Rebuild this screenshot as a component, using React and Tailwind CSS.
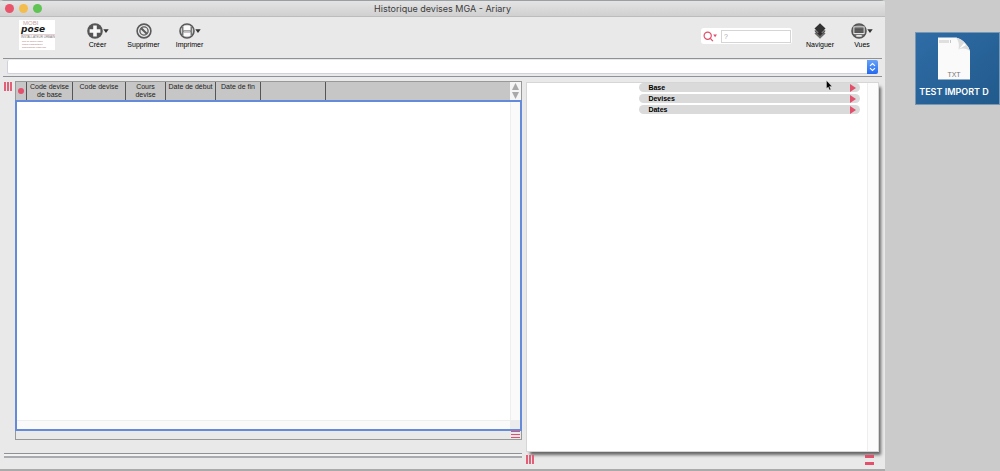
import React from "react";

const columns = [
  { label: "Code devise de base", width: "w-[46px]" },
  { label: "Code devise", width: "w-[53px]" },
  { label: "Cours devise", width: "w-[40px]" },
  { label: "Date de début", width: "w-[50px]" },
  { label: "Date de fin", width: "w-[45px]" },
  { label: "", width: "w-[65px]" },
];

const sections = ["Base", "Devises", "Dates"];

function Caret() {
  return (
    <svg width="6" height="4" viewBox="0 0 6 4" className="shrink-0" aria-hidden="true">
      <path d="M0.3 0.3h5.4L3 3.9z" fill="#333" />
    </svg>
  );
}

function CreateIcon() {
  return (
    <svg width="16" height="16" viewBox="0 0 16 16" aria-hidden="true">
      <circle cx="8" cy="8" r="7.8" fill="#555" />
      <path d="M6.2 2.6h3.6v3.6h3.6v3.6H9.8v3.6H6.2V9.8H2.6V6.2h3.6z" fill="#f7f7f7" />
    </svg>
  );
}

function DeleteIcon() {
  return (
    <svg width="16" height="16" viewBox="0 0 16 16" fill="none" aria-hidden="true">
      <circle cx="8" cy="8" r="6.9" stroke="#5a5a5a" strokeWidth="1.6" />
      <circle cx="8" cy="8" r="4.1" stroke="#5a5a5a" strokeWidth="1.3" />
      <path d="M5.2 5.2l5.6 5.6" stroke="#5a5a5a" strokeWidth="2" />
    </svg>
  );
}

function PrintIcon() {
  return (
    <svg width="16" height="16" viewBox="0 0 16 16" fill="none" aria-hidden="true">
      <circle cx="8" cy="8" r="7" fill="#d0d0d0" stroke="#5a5a5a" strokeWidth="1.6" />
      <path d="M3.600 4v8.500M12.400 4v8.500" stroke="#777" strokeWidth="1.200" />
      <path d="M5 2.800h6v4.200H5zM5 9.800h6v3.200H5z" fill="#fafafa" />
      <path d="M3.500 8.300h9" stroke="#888" strokeWidth="2" />
      <path d="M5 8.300h6" stroke="#ccc" strokeWidth="1" />
    </svg>
  );
}

function NavigateIcon() {
  return (
    <svg width="12" height="16" viewBox="0 0 12 16" aria-hidden="true">
      <path d="M6 5.600l5.500 5L6 15.800l-5.500-5.200z" fill="#6a6a6a" />
      <path d="M6 3l5.500 5L6 13.200.5 8z" fill="#777" />
      <path d="M6 .3l5.500 5.200L6 10.700.5 5.500z" fill="#333" />
      <path d="M6 8.300l2.500 2.300L6 12.900l-2.500-2.300z" fill="#2c2c2c" />
      <path d="M.8 8l5.200 4.800L11.200 8" stroke="#444" strokeWidth=".8" fill="none" />
    </svg>
  );
}

function ViewsIcon() {
  return (
    <svg width="16" height="16" viewBox="0 0 16 16" fill="none" aria-hidden="true">
      <circle cx="8" cy="8" r="7" fill="#777" stroke="#555" strokeWidth="1.6" />
      <rect x="2.9" y="3.9" width="10.2" height="6.6" fill="#505050" stroke="#e4e4e4" strokeWidth="1" />
      <path d="M4 5.5h8M4 7.2h8M4 8.900h8" stroke="#777" strokeWidth=".5" />
      <path d="M5.300 12h5.400v1.800H5.300z" fill="#e8e8e8" />
    </svg>
  );
}

function ToolButton({ label, icon, menu, width }) {
  return (
    <button type="button" className={`flex flex-col items-center gap-0.5 ${width}`}>
      <span className="flex items-center">
        {icon}
        {menu && <Caret />}
      </span>
      <span className="text-[7px] leading-[8px] text-black">{label}</span>
    </button>
  );
}

function Grip() {
  return (
    <span className="flex h-[9px] w-2 shrink-0 justify-between" aria-hidden="true">
      <i className="w-[2px] bg-[#e25f78]" />
      <i className="w-[2px] bg-[#e25f78]" />
      <i className="w-[2px] bg-[#e25f78]" />
    </span>
  );
}

function Logo() {
  return (
    <div className="h-[30px] w-9 shrink-0 overflow-hidden bg-white pl-0.5">
      <p className="pl-0.5 text-[6px] leading-[6px] text-[#c9a3a3]">MOBI</p>
      <p className="font-['DejaVu_Sans',sans-serif] text-[9px] font-bold italic leading-[7px] text-[#1b1b1b]">pose</p>
      <div className="mt-px h-px bg-[#e6cccc]" />
      <p className="whitespace-nowrap text-[3px] leading-[4px] text-[#777]">INSTALLATEUR URBAIN</p>
      <div className="flex flex-col items-start pl-px pt-px text-[2px] leading-[3px] text-[#a06a6a]">
        <p>pose de mobilier urbain</p>
        <p>études et signalétiques</p>
        <p>www.mobipose-urbain.com</p>
      </div>
    </div>
  );
}

function TitleBar() {
  return (
    <header className="grid h-[17px] grid-cols-[1fr_auto_1fr] items-center border-b border-t border-b-[#bcbcbc] border-t-[#9a9fa3] bg-linear-to-b from-[#e4e4e4] to-[#d0d0d0] px-[5px]">
      <div className="flex gap-[5px]">
        <button type="button" aria-label="Fermer" className="size-[9px] rounded-full bg-[#e9546b]" />
        <button type="button" aria-label="Réduire" className="size-[9px] rounded-full bg-[#f3bd4e]" />
        <button type="button" aria-label="Agrandir" className="size-[9px] rounded-full bg-[#5fc454]" />
      </div>
      <h1 className="pt-px font-[Inter,sans-serif] text-[9px] leading-[14px] text-[#3c3c3c]">
        Historique devises MGA - Ariary
      </h1>
    </header>
  );
}

function Toolbar() {
  return (
    <div className="mx-[3px] flex h-[42px] items-start border-b border-[#8f9294] pl-4 pt-[3px]">
      <Logo />
      <div className="flex pl-6 pt-[3px]">
        <ToolButton label="Créer" icon={<CreateIcon />} menu width="w-[37px]" />
        <ToolButton label="Supprimer" icon={<DeleteIcon />} width="w-[55px]" />
        <ToolButton label="Imprimer" icon={<PrintIcon />} menu width="w-[37px]" />
      </div>
      <div className="ml-auto flex items-start pr-0.5 pt-[3px]">
        <div className="mr-3 mt-[5px] flex h-4 w-[91px] items-center gap-1 rounded-[3px] bg-white p-px pl-0.5">
          <button type="button" aria-label="Options de recherche" className="flex">
            <svg width="14" height="11" viewBox="0 0 14 11" fill="none" aria-hidden="true">
              <circle cx="4.7" cy="4.7" r="3.6" stroke="#e0506c" strokeWidth="1.2" />
              <path d="M7.3 7.4l2.6 2.7" stroke="#e0506c" strokeWidth="1.3" />
              <path d="M10.2 3.400h3.800l-1.900 2.800z" fill="#e0506c" />
            </svg>
          </button>
          <input
            type="text"
            aria-label="Rechercher"
            placeholder="?"
            className="h-[13px] w-0 flex-1 border border-[#d5d5d5] bg-white px-0.5 text-[7px] placeholder:text-[#aaa]"
          />
        </div>
        <ToolButton label="Naviguer" icon={<NavigateIcon />} width="w-[32px]" />
        <ToolButton label="Vues" icon={<ViewsIcon />} menu width="ml-2 w-[36px]" />
      </div>
    </div>
  );
}

function Combo() {
  return (
    <div className="mx-[3px] border-b border-[#8f9294] pb-0.5 pl-1 pr-1 pt-px">
      <div className="flex h-[14px] items-stretch">
        <select
          aria-label="Filtre"
          className="min-w-0 flex-1 appearance-none rounded-l-[2px] border-b border-l border-[#cfd2da] bg-white"
        >
          <option value="" />
        </select>
        <span className="flex w-[11px] items-center justify-center rounded-r-[2px] bg-linear-to-b from-[#67a2f8] to-[#2368f0]" aria-hidden="true">
          <svg width="7" height="10" viewBox="0 0 7 10" fill="none" stroke="white" strokeWidth="1.1">
            <path d="M1 3.8l2.5-2.3L6 3.8M1 6.2l2.5 2.3L6 6.2" />
          </svg>
        </span>
      </div>
    </div>
  );
}

function ListPanel() {
  return (
    <section className="flex min-h-0 flex-1 flex-col border border-[#969998]">
      <div className="flex h-[18px] shrink-0 bg-[#c6c6c6]">
        <table className="h-[18px] w-full flex-1 table-fixed border-separate border-spacing-0 text-[7px] leading-[8px] text-[#222]">
          <thead>
            <tr>
              <th className="w-[11px] border-r border-[#555] p-0">
                <span className="mx-auto block size-[6px] rounded-full bg-[#e3506c]" />
              </th>
              {columns.map((column, index) => (
                <th
                  key={index}
                  scope="col"
                  className={`${column.width} border-r border-[#555] px-px pt-px pb-0 align-top font-normal`}
                >
                  {column.label}
                </th>
              ))}
              <th className="p-0" />
            </tr>
          </thead>
        </table>
        <div className="flex w-[11px] shrink-0 flex-col items-center justify-center gap-0.5 bg-[#f5f5f5]">
          <button type="button" aria-label="Défiler vers le haut" className="flex">
            <svg width="7" height="7" viewBox="0 0 7 7" aria-hidden="true">
              <path d="M3.5 0L7 7H0z" fill="#a9a9a9" />
            </svg>
          </button>
          <button type="button" aria-label="Défiler vers le bas" className="flex">
            <svg width="7" height="7" viewBox="0 0 7 7" aria-hidden="true">
              <path d="M3.5 7L7 0H0z" fill="#a9a9a9" />
            </svg>
          </button>
        </div>
      </div>
      <div className="-mx-px grid min-h-0 flex-1 grid-cols-[1fr_10px] grid-rows-[1fr_9px] border-2 border-[#648ad9] bg-white">
        <div />
        <div className="border-l border-[#eee] bg-[#fafafa]" />
        <div className="border-t border-[#eee] bg-[#fafafa]" />
        <div className="bg-[#ececec]" />
      </div>
      <div className="flex h-2 shrink-0 justify-end pr-px">
        <span className="flex h-[7px] w-[9px] flex-col justify-between" aria-hidden="true">
          <i className="h-px bg-[#e0506c]" />
          <i className="h-px bg-[#e0506c]" />
          <i className="h-px bg-[#e0506c]" />
        </span>
      </div>
    </section>
  );
}

function DetailPanel() {
  return (
    <section className="mt-px flex min-h-0 flex-1 border border-[#d6d6d6] bg-white shadow-[3px_4px_3px_-1px_#666]">
      <ul className="ml-28 mr-[7px] flex flex-1 flex-col gap-[2px]">
        {sections.map((name) => (
          <li key={name} className="flex">
            <button
              type="button"
              className="flex h-[9px] flex-1 items-center justify-between rounded-full bg-[#dadada] pl-[9px] pr-1 text-[7px] font-bold leading-[9px] text-black"
            >
              {name}
              <svg width="6" height="8" viewBox="0 0 6 8" aria-hidden="true">
                <path d="M0 0l6 4-6 4z" fill="#e3506c" />
              </svg>
            </button>
          </li>
        ))}
      </ul>
      <div className="w-[11px] border-l border-[#eee] bg-[#fcfcfc]" />
    </section>
  );
}

function DesktopFile() {
  return (
    <button
      type="button"
      className="flex h-[73px] w-[85px] flex-col items-center gap-[6px] overflow-hidden border border-[#7798b5] bg-linear-to-br from-[#2f6ca6] to-[#215a8c] pr-[7px] pt-1"
    >
      <svg width="34" height="43" viewBox="0 0 34 43" className="shrink-0" aria-hidden="true">
        <path d="M1 .5h18q6 1.5 9 5.5 4 4 5 8v28.500H1z" fill="#fafafa" />
        <path d="M19 .5q4 5 2.500 12 6-2.500 11.500 1.500-1-4-5-8-3-4-9-5.500z" fill="#dcdcdc" />
        <path d="M22 12l5-6 2 2z" fill="#fff" />
        <path d="M3 3v3M5 3v3M7 3v3M9 3v3M11 3v3M13.500 3v3" stroke="#c4c4c4" strokeWidth="1" />
        <text x="17" y="40" textAnchor="middle" fontSize="7" fill="#777" fontFamily="Liberation Sans, sans-serif">
          TXT
        </text>
      </svg>
      <span className="whitespace-nowrap font-[Inter,sans-serif] text-[9px] font-semibold leading-[12px] text-white">
        TEST IMPORT D
      </span>
    </button>
  );
}

export default function App() {
  return (
    <div className="relative flex h-screen bg-[#cbcbcb] font-['Liberation_Sans',Arial,sans-serif]">
      <main className="flex min-w-0 flex-1 flex-col overflow-hidden rounded-t-[4px] border-b-2 border-[#aaa] bg-[#e9e9e9]">
        <TitleBar />
        <Toolbar />
        <Combo />
        <div className="flex min-h-0 flex-1 gap-1 pl-1 pr-1.5 pt-1">
          <div className="flex min-w-0 flex-[519] flex-col">
            <div className="flex min-h-0 flex-1 gap-[3px]">
              <div className="pt-px">
                <Grip />
              </div>
              <ListPanel />
            </div>
            <div className="mb-[11px] mt-[13px] h-[5px] shrink-0 border-b-2 border-t border-b-[#a9abae] border-t-[#8f9294] bg-[#f2f2f2]" />
          </div>
          <div className="flex min-w-0 flex-[353] flex-col">
            <DetailPanel />
            <div className="flex h-[17px] shrink-0 items-start justify-between pr-[5px] pt-[3px]">
              <Grip />
              <span className="flex h-[10px] w-[9px] flex-col justify-between" aria-hidden="true">
                <i className="h-[3px] bg-[#e3506c]" />
                <i className="h-[3px] bg-[#e3506c]" />
              </span>
            </div>
          </div>
        </div>
      </main>
      <aside className="flex w-[115px] shrink-0 items-start justify-end pt-8">
        <DesktopFile />
      </aside>
      <svg className="pointer-events-none absolute right-[168px] top-[80px]" width="6" height="11" viewBox="0 0 6 11" aria-hidden="true">
        <path d="M.5 .5v8l1.700-1.500 1.300 3 1.300-.6-1.300-2.900H6z" fill="#000" stroke="#fff" strokeWidth=".3" />
      </svg>
    </div>
  );
}
